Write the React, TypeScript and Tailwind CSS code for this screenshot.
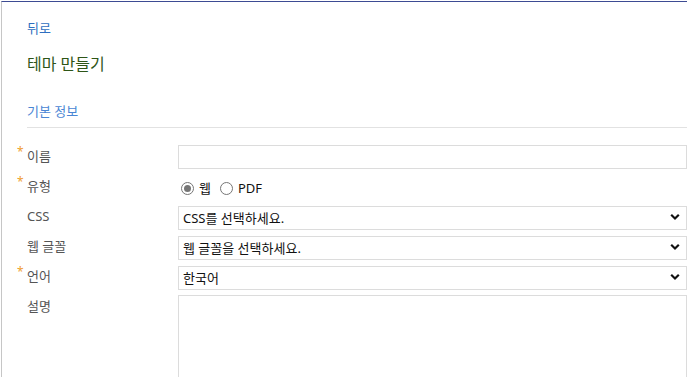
import React from "react";

function Chevron() {
  return (
    <svg
      className="pointer-events-none absolute right-[7px] top-1/2 -translate-y-1/2"
      width="10"
      height="7"
      viewBox="0 0 10 7"
    >
      <path d="M1.2 1.3 L5 5 L8.8 1.3" fill="none" stroke="#111" strokeWidth="2.2" />
    </svg>
  );
}

function Label({ text, required }: { text: string; required?: boolean }) {
  return (
    <div className="flex h-[24px] items-start">
      <span className="w-[10px] pt-[1px] text-[12px] leading-[12px] text-[#f0a030]">
        {required ? "*" : ""}
      </span>
      <span className="text-[13px] leading-[22px] text-[#555]">{text}</span>
    </div>
  );
}

function Select({ value }: { value: string }) {
  return (
    <div className="relative h-[24px]">
      <select
        className="h-full w-full appearance-none border border-[#dcdcdc] bg-white pl-[4px] text-[13px] leading-[22px] text-[#111] outline-none"
        defaultValue={value}
      >
        <option>{value}</option>
      </select>
      <Chevron />
    </div>
  );
}

function Radio({ checked, label }: { checked?: boolean; label: string }) {
  return (
    <label className="flex items-center gap-[5px]">
      <span className="flex h-[13px] w-[13px] items-center justify-center rounded-full border border-[#767676] bg-white">
        {checked ? <span className="h-[7px] w-[7px] rounded-full bg-[#767676]" /> : null}
      </span>
      <span className="text-[13px] leading-[20px] text-[#111]">{label}</span>
    </label>
  );
}

export default function App() {
  return (
    <div className="h-[377px] w-[687px] overflow-hidden bg-white pl-px pt-px font-['Noto_Sans','Noto_Sans_CJK_KR',sans-serif]">
      <div className="h-full border-l border-t border-l-[#c6c6c6] border-t-[#3d4b93] pl-[25px] pt-[16px]">
        <a className="block text-[13px] leading-[20px] text-[#2f6fc0]">뒤로</a>
        <h1 className="mt-[15px] text-[16px] leading-[22px] text-[#2e5517]">테마 만들기</h1>
        <h2 className="mt-[26px] text-[13px] leading-[20px] text-[#4a86d4]">기본 정보</h2>
        <div className="mt-[6px] border-t border-[#e2e2e2]" />
        <div className="-ml-[10px] mt-[17px] grid grid-cols-[161px_1fr] gap-y-[6px]">
          <Label text="이름" required />
          <input className="h-[24px] w-full border border-[#dcdcdc] bg-white outline-none" />

          <Label text="유형" required />
          <div className="flex h-[24px] items-center gap-[9px] pl-[3px] pt-[2px]">
            <Radio checked label="웹" />
            <Radio label="PDF" />
          </div>

          <Label text="CSS" />
          <Select value="CSS를 선택하세요." />

          <Label text="웹 글꼴" />
          <Select value="웹 글꼴을 선택하세요." />

          <Label text="언어" required />
          <Select value="한국어" />

          <Label text="설명" />
          <textarea className="h-[90px] w-full resize-none border border-[#dcdcdc] bg-white outline-none" />
        </div>
      </div>
    </div>
  );
}
